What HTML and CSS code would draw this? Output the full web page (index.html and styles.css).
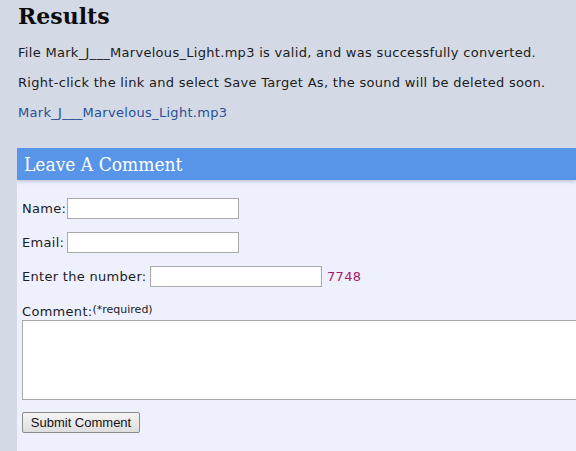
FILE: index.html
```html
<!DOCTYPE html>
<html>
<head>
<meta charset="utf-8">
<link rel="stylesheet" href="styles.css">
</head>
<body>
<div class="results">
  <h1 class="title">Results</h1>
  <p class="msg first">File Mark_J___Marvelous_Light.mp3 is valid, and was successfully converted.</p>
  <p class="msg">Right-click the link and select Save Target As, the sound will be deleted soon.</p>
  <p class="msg"><a class="dl" href="#">Mark_J___Marvelous_Light.mp3</a></p>
</div>
<div class="panel">
  <h2 class="panel-head">Leave A Comment</h2>
  <form class="form">
    <div class="row"><label class="lbl short">Name:</label><input class="field" type="text"></div>
    <div class="row"><label class="lbl short">Email:</label><input class="field" type="text"></div>
    <div class="row"><label class="lbl long">Enter the number:</label><input class="field" type="text"><span class="code">7748</span></div>
    <div class="comment-lbl">Comment:<sup class="req">(*required)</sup></div>
    <textarea class="comment"></textarea>
    <div class="actions"><button class="submit" type="button">Submit Comment</button></div>
  </form>
</div>
</body>
</html>
```
FILE: styles.css
```css
html, body {
  margin: 0;
  padding: 0;
  overflow: hidden;
}
body {
  background: #d3dae6;
  font-family: "DejaVu Sans", Verdana, sans-serif;
  font-size: 13px;
  letter-spacing: 0.3px;
  color: #1c1c1c;
  height: 451px;
}
.results {
  padding: 0 0 0 18px;
}
.title {
  font-family: "DejaVu Serif", Georgia, serif;
  font-weight: bold;
  font-size: 22px;
  letter-spacing: 0;
  margin: 0;
  padding-top: 4px;
  height: 30px;
  line-height: 24px;
  color: #0c0c0c;
}
.msg {
  margin: 14px 0 0 0;
  line-height: 16px;
}
.msg.first {
  margin-top: 11px;
}
.dl {
  color: #2a4f94;
  text-decoration: none;
}
.panel {
  margin: 27px 0 0 17px;
  background: #eef0fe;
  overflow: hidden;
  height: 320px;
}
.panel-head {
  margin: 0;
  height: 32px;
  background: #5895e8;
  color: #ffffff;
  font-family: "DejaVu Serif Condensed", "DejaVu Serif", Georgia, serif;
  font-weight: normal;
  font-size: 19px;
  letter-spacing: 0;
  line-height: 32px;
  padding-left: 7px;
  box-shadow: 0 2px 3px rgba(120, 130, 160, 0.35);
}
.form {
  padding: 18px 0 0 5px;
}
.row {
  height: 21px;
  line-height: 21px;
  margin-bottom: 13px;
  white-space: nowrap;
}
.lbl {
  display: inline-block;
  vertical-align: top;
}
.lbl.short {
  width: 45px;
}
.lbl.long {
  width: 128px;
}
.field {
  box-sizing: border-box;
  width: 172px;
  height: 21px;
  margin: 0;
  border: 1px solid #a9a9a9;
  background: #fff;
  padding: 0 2px;
  vertical-align: top;
}
.code {
  color: #a62068;
  margin-left: 5px;
}
.comment-lbl {
  padding-top: 4px;
  line-height: 16px;
  height: 16px;
}
.req {
  font-size: 11px;
  letter-spacing: 0;
  position: relative;
  top: -3px;
  vertical-align: baseline;
}
.comment {
  display: block;
  box-sizing: border-box;
  width: 620px;
  height: 80px;
  margin: 0;
  border: 1px solid #a9a9a9;
  background: #fff;
  resize: none;
}
.actions {
  margin-top: 12px;
}
.submit {
  box-sizing: border-box;
  width: 118px;
  height: 21px;
  font-family: "Liberation Sans", Arial, sans-serif;
  font-size: 13px;
  letter-spacing: 0;
  color: #111;
  border: 1px solid #8a8a8a;
  border-radius: 2px;
  background: linear-gradient(#f4f4f4, #dedede);
  padding: 0;
}
```
